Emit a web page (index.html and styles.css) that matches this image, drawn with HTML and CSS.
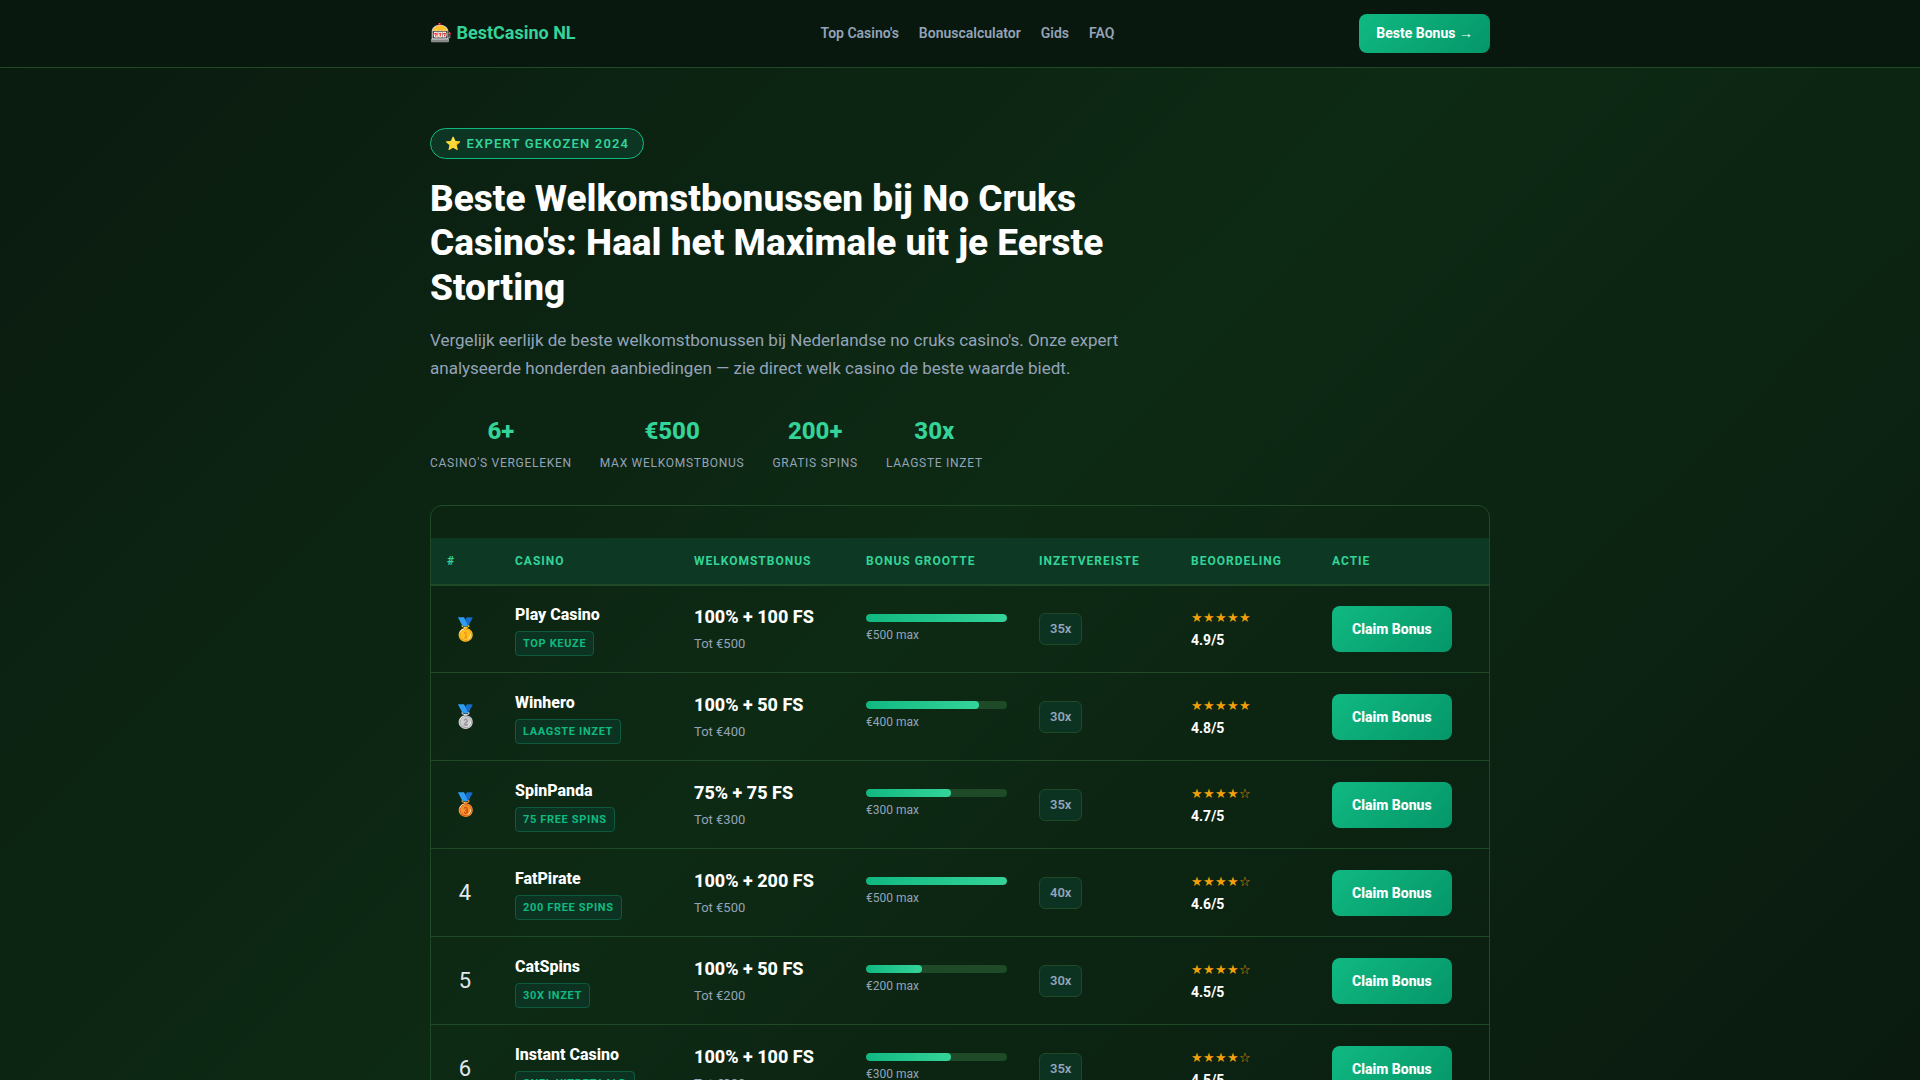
FILE: index.html
```
<!DOCTYPE html>
<html lang="nl">
<head>
    <meta charset="UTF-8">
    <meta name="viewport" content="width=device-width, initial-scale=1.0">
    <title>Beste Welkomstbonussen bij No Cruks Casino's</title>
    <link rel="stylesheet" href="styles.css">
</head>
<body>

    <header class="site-header">
        <div class="container header-inner">
            <a href="#" class="logo">🎰 BestCasino NL</a>
            <nav class="main-nav">
                <a href="#top-casinos">Top Casino's</a>
                <a href="#calculator">Bonuscalculator</a>
                <a href="#gids">Gids</a>
                <a href="#faq">FAQ</a>
            </nav>
            <a href="#top-casinos" class="header-cta">Beste Bonus →</a>
        </div>
    </header>

    <main class="container">
        <section class="hero">
            <div class="hero-badge">⭐ Expert Gekozen 2024</div>
            <h1>Beste Welkomstbonussen bij No Cruks Casino's: Haal het Maximale uit je Eerste Storting</h1>
            <p class="hero-sub">Vergelijk eerlijk de beste welkomstbonussen bij Nederlandse no cruks casino's. Onze expert analyseerde honderden aanbiedingen — zie direct welk casino de beste waarde biedt.</p>
            <div class="stats">
                <div class="stat">
                    <div class="stat-num">6+</div>
                    <div class="stat-label">Casino's vergeleken</div>
                </div>
                <div class="stat">
                    <div class="stat-num">€500</div>
                    <div class="stat-label">Max welkomstbonus</div>
                </div>
                <div class="stat">
                    <div class="stat-num">200+</div>
                    <div class="stat-label">Gratis spins</div>
                </div>
                <div class="stat">
                    <div class="stat-num">30x</div>
                    <div class="stat-label">Laagste inzet</div>
                </div>
            </div>
        </section>

        <section class="table-card" id="top-casinos">
            <table>
                <colgroup>
                    <col class="col-rank">
                    <col class="col-casino">
                    <col class="col-bonus">
                    <col class="col-size">
                    <col class="col-wager">
                    <col class="col-rating">
                    <col class="col-action">
                </colgroup>
                <thead>
                    <tr>
                        <th>#</th>
                        <th>Casino</th>
                        <th>Welkomstbonus</th>
                        <th>Bonus grootte</th>
                        <th>Inzetvereiste</th>
                        <th>Beoordeling</th>
                        <th>Actie</th>
                    </tr>
                </thead>
                <tbody>
                    <tr>
                        <td class="rank">🥇</td>
                        <td><div class="casino-name">Play Casino</div><span class="tag">Top keuze</span></td>
                        <td><div class="bonus-main">100% + 100 FS</div><div class="bonus-sub">Tot €500</div></td>
                        <td><div class="bar"><div class="bar-fill" style="width: 100%"></div></div><div class="bar-label">€500 max</div></td>
                        <td><span class="wager">35x</span></td>
                        <td><div class="stars">★★★★★</div><div class="score">4.9/5</div></td>
                        <td><a href="#" class="claim-btn">Claim Bonus</a></td>
                    </tr>
                    <tr>
                        <td class="rank">🥈</td>
                        <td><div class="casino-name">Winhero</div><span class="tag">Laagste inzet</span></td>
                        <td><div class="bonus-main">100% + 50 FS</div><div class="bonus-sub">Tot €400</div></td>
                        <td><div class="bar"><div class="bar-fill" style="width: 80%"></div></div><div class="bar-label">€400 max</div></td>
                        <td><span class="wager">30x</span></td>
                        <td><div class="stars">★★★★★</div><div class="score">4.8/5</div></td>
                        <td><a href="#" class="claim-btn">Claim Bonus</a></td>
                    </tr>
                    <tr>
                        <td class="rank">🥉</td>
                        <td><div class="casino-name">SpinPanda</div><span class="tag">75 free spins</span></td>
                        <td><div class="bonus-main">75% + 75 FS</div><div class="bonus-sub">Tot €300</div></td>
                        <td><div class="bar"><div class="bar-fill" style="width: 60%"></div></div><div class="bar-label">€300 max</div></td>
                        <td><span class="wager">35x</span></td>
                        <td><div class="stars">★★★★☆</div><div class="score">4.7/5</div></td>
                        <td><a href="#" class="claim-btn">Claim Bonus</a></td>
                    </tr>
                    <tr>
                        <td class="rank">4</td>
                        <td><div class="casino-name">FatPirate</div><span class="tag">200 free spins</span></td>
                        <td><div class="bonus-main">100% + 200 FS</div><div class="bonus-sub">Tot €500</div></td>
                        <td><div class="bar"><div class="bar-fill" style="width: 100%"></div></div><div class="bar-label">€500 max</div></td>
                        <td><span class="wager">40x</span></td>
                        <td><div class="stars">★★★★☆</div><div class="score">4.6/5</div></td>
                        <td><a href="#" class="claim-btn">Claim Bonus</a></td>
                    </tr>
                    <tr>
                        <td class="rank">5</td>
                        <td><div class="casino-name">CatSpins</div><span class="tag">30x inzet</span></td>
                        <td><div class="bonus-main">100% + 50 FS</div><div class="bonus-sub">Tot €200</div></td>
                        <td><div class="bar"><div class="bar-fill" style="width: 40%"></div></div><div class="bar-label">€200 max</div></td>
                        <td><span class="wager">30x</span></td>
                        <td><div class="stars">★★★★☆</div><div class="score">4.5/5</div></td>
                        <td><a href="#" class="claim-btn">Claim Bonus</a></td>
                    </tr>
                    <tr>
                        <td class="rank">6</td>
                        <td><div class="casino-name">Instant Casino</div><span class="tag">Snel uitbetaald</span></td>
                        <td><div class="bonus-main">100% + 100 FS</div><div class="bonus-sub">Tot €300</div></td>
                        <td><div class="bar"><div class="bar-fill" style="width: 60%"></div></div><div class="bar-label">€300 max</div></td>
                        <td><span class="wager">35x</span></td>
                        <td><div class="stars">★★★★☆</div><div class="score">4.5/5</div></td>
                        <td><a href="#" class="claim-btn">Claim Bonus</a></td>
                    </tr>
                </tbody>
            </table>
        </section>
    </main>

</body>
</html>
```

FILE: styles.css
```
* {
    margin: 0;
    padding: 0;
    box-sizing: border-box;
}

body {
    font-family: Roboto, sans-serif;
    font-size: 16px;
    line-height: 1.6;
    color: #e2e8f0;
    background: linear-gradient(135deg, #0a1a0f 0%, #0d2a14 50%, #0a1a0f 100%) fixed;
    min-height: 100vh;
    overflow-x: hidden;
}

a {
    text-decoration: none;
}

.container {
    max-width: 1100px;
    margin: 0 auto;
    padding: 0 20px;
}

/* Header */
.site-header {
    background: #09180e;
    border-bottom: 1px solid #1f4a28;
    padding: 14px 0;
}

.header-inner {
    display: flex;
    justify-content: space-between;
    align-items: center;
}

.logo {
    font-size: 18px;
    font-weight: 700;
    color: #34d399;
}

.main-nav {
    display: flex;
    gap: 20px;
}

.main-nav a {
    font-size: 14px;
    font-weight: 600;
    color: #94a3b8;
}

.header-cta {
    font-size: 14px;
    font-weight: 700;
    line-height: 21px;
    color: #fff;
    background: linear-gradient(135deg, #10b981, #059669);
    padding: 9px 17px;
    border-radius: 8px;
}

/* Hero */
.hero {
    padding: 60px 0 32px;
}

.hero-badge {
    display: inline-block;
    font-size: 13px;
    font-weight: 600;
    line-height: 19px;
    letter-spacing: 0.09em;
    text-transform: uppercase;
    color: #34d399;
    background: #0d3524;
    border: 1px solid #10b981;
    border-radius: 20px;
    padding: 5px 14px;
    margin-bottom: 18px;
}

.hero h1 {
    max-width: 720px;
    font-size: 37px;
    font-weight: 800;
    line-height: 1.2;
    color: #fff;
    margin-bottom: 16px;
}

.hero-sub {
    max-width: 700px;
    font-size: 17px;
    line-height: 28px;
    color: #94a3b8;
    margin-bottom: 30px;
}

.stats {
    display: flex;
    flex-wrap: wrap;
    gap: 28px;
}

.stat {
    text-align: center;
}

.stat-num {
    font-size: 24px;
    font-weight: 800;
    color: #34d399;
    margin-bottom: 3px;
}

.stat-label {
    font-size: 12px;
    letter-spacing: 0.06em;
    text-transform: uppercase;
    color: #94a3b8;
}

/* Vergelijkingstabel */
.table-card {
    border: 1px solid #1f4a28;
    border-radius: 12px;
    padding: 32px 0;
}

table {
    width: 100%;
    border-collapse: collapse;
}

.col-rank { width: 68px; }
.col-casino { width: 179px; }
.col-bonus { width: 172px; }
.col-size { width: 173px; }
.col-wager { width: 152px; }
.col-rating { width: 141px; }
.col-action { width: 173px; }

thead tr {
    background: #0d3823;
    border-bottom: 2px solid #1f4a28;
}

th {
    font-size: 12px;
    font-weight: 700;
    letter-spacing: 1px;
    text-transform: uppercase;
    text-align: left;
    white-space: nowrap;
    color: #34d399;
    padding: 14px 16px 13px;
}

tbody tr {
    border-bottom: 1px solid #1f4a28;
}

td {
    height: 88px;
    padding: 14px 16px;
    vertical-align: middle;
}

.rank {
    font-size: 22px;
    text-align: center;
}

.casino-name {
    font-size: 16px;
    font-weight: 800;
    color: #fff;
    margin-bottom: 2px;
}

.tag {
    display: inline-block;
    font-size: 11px;
    font-weight: 700;
    line-height: 17px;
    letter-spacing: 0.06em;
    text-transform: uppercase;
    white-space: nowrap;
    color: #10b981;
    background: #0c3322;
    border: 1px solid #0d5b3e;
    border-radius: 4px;
    padding: 3px 7px;
}

.bonus-main {
    font-size: 18px;
    font-weight: 800;
    white-space: nowrap;
    color: #fff;
}

.bonus-sub {
    font-size: 13px;
    color: #94a3b8;
    margin-top: 2px;
}

.bar {
    height: 8px;
    background: #1f4a28;
    border-radius: 4px;
    overflow: hidden;
}

.bar-fill {
    height: 100%;
    background: linear-gradient(90deg, #10b981, #34d399);
    border-radius: 4px;
}

.bar-label {
    font-size: 12px;
    color: #94a3b8;
    margin-top: 4px;
}

.wager {
    display: inline-block;
    font-size: 13px;
    font-weight: 600;
    line-height: 20px;
    color: #94a3b8;
    background: #0c3322;
    border: 1px solid #1f4a28;
    border-radius: 6px;
    padding: 5px 10px;
}

.stars {
    font-size: 13px;
    line-height: 22px;
    color: #f59e0b;
}

.score {
    font-size: 14px;
    font-weight: 700;
    color: #fff;
}

.claim-btn {
    display: inline-block;
    font-size: 14px;
    font-weight: 800;
    line-height: 22px;
    white-space: nowrap;
    color: #fff;
    background: linear-gradient(135deg, #10b981, #059669);
    border-radius: 8px;
    padding: 12px 20px;
}
```
